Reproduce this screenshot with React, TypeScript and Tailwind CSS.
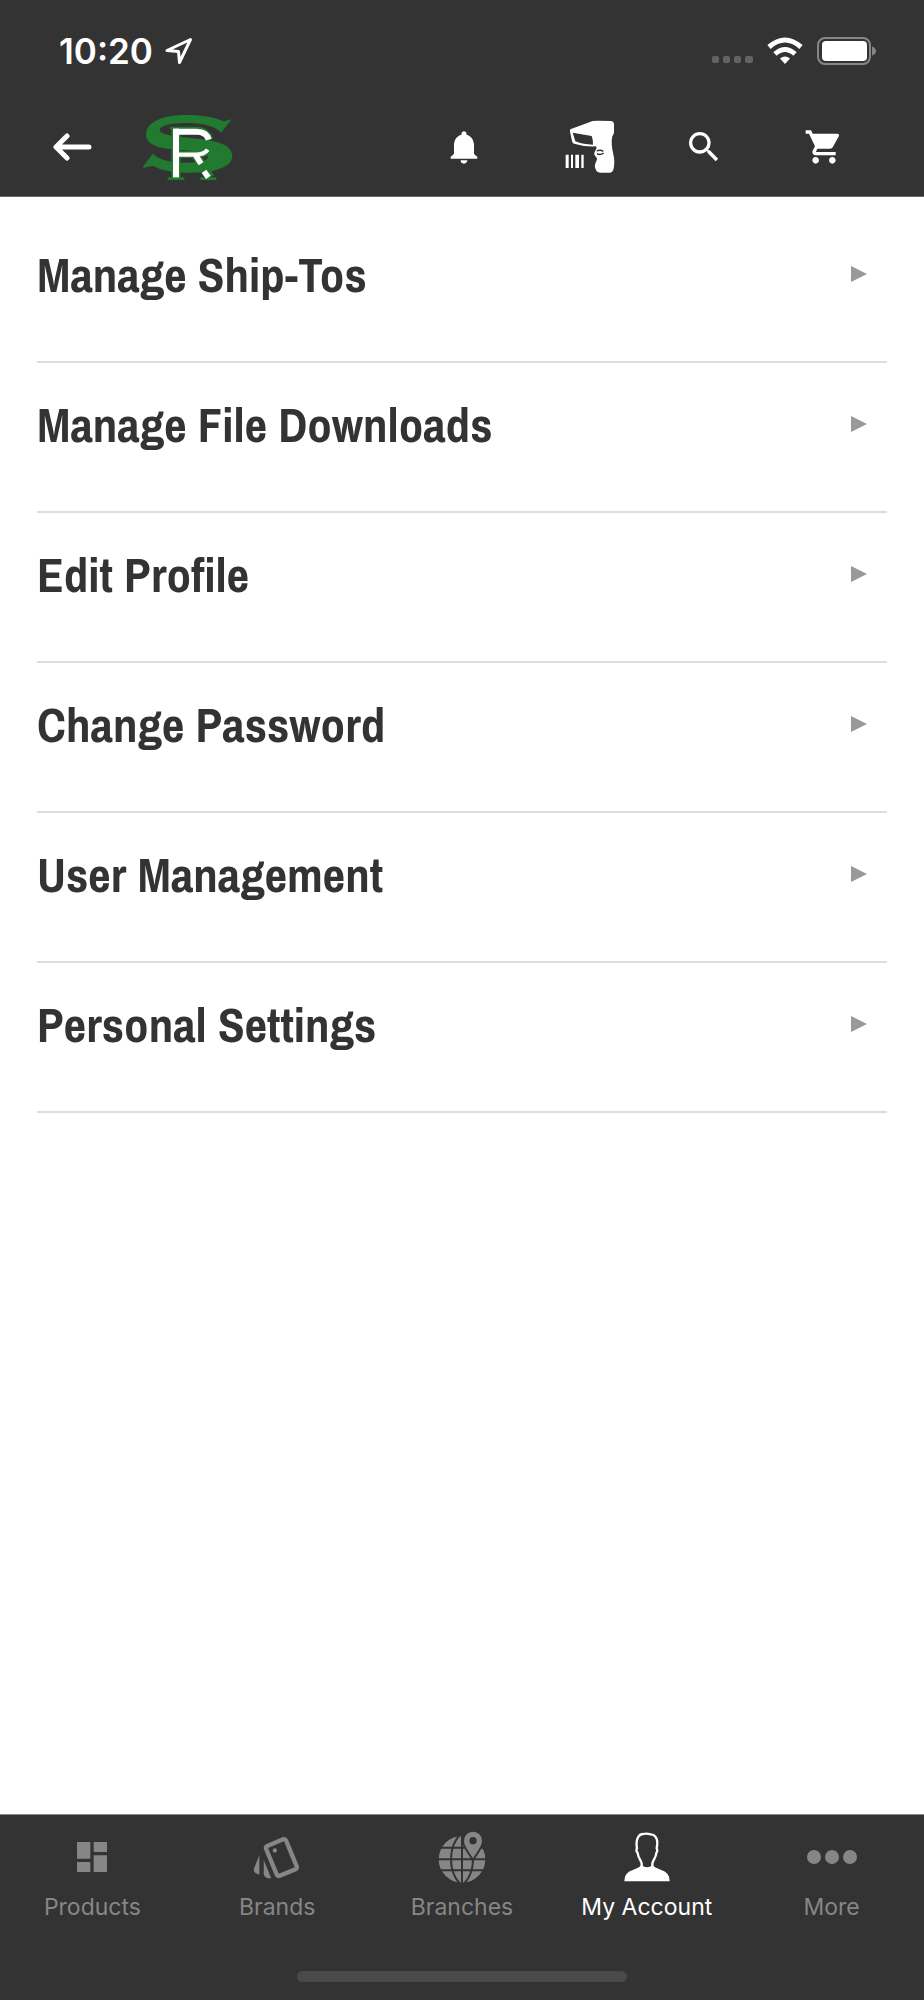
import type { ReactNode } from 'react'
import { MdDashboard, MdNotifications, MdOutlineStyle, MdSearch, MdShoppingCart } from 'react-icons/md'

interface Tab {
  label: string
  icon: ReactNode
  active?: boolean
}

const menuItems = [
  'Manage Ship-Tos',
  'Manage File Downloads',
  'Edit Profile',
  'Change Password',
  'User Management',
  'Personal Settings',
]

const tabs: Tab[] = [
  { label: 'Products', icon: <MdDashboard className="w-10 h-10" /> },
  { label: 'Brands', icon: <MdOutlineStyle className="w-[52px] h-[52px]" /> },
  { label: 'Branches', icon: <GlobePinIcon /> },
  { label: 'My Account', icon: <PersonIcon />, active: true },
  { label: 'More', icon: <MoreIcon /> },
]

function LocationIcon() {
  return (
    <svg viewBox="0 0 28 28" className="w-7 h-7" fill="none" stroke="currentColor" strokeWidth="3" strokeLinejoin="round">
      <path d="M25.500 2.500 L2 13.500 L13.500 14.500 L14.500 25.500 Z" />
    </svg>
  )
}

function StatusIcons() {
  return (
    <div className="flex items-center">
      <svg viewBox="0 0 42 28" className="w-[42px] h-7" fill="#636363">
        <rect x="0" y="19" width="7" height="7" rx="2" />
        <rect x="11" y="19" width="7" height="7" rx="2" />
        <rect x="22" y="19" width="7" height="7" rx="2" />
        <rect x="33" y="19" width="8" height="7" rx="2" />
      </svg>
      <svg viewBox="0 0 36 28" className="w-9 h-7 ml-[13px]" fill="none" stroke="#fff" strokeWidth="5">
        <path d="M2 10 Q18 -4 34 10" />
        <path d="M8 17 Q18 8 28 17" />
        <path d="M18 27 L13 21.500 Q18 17.500 23 21.500 Z" fill="#fff" stroke="none" />
      </svg>
      <svg viewBox="0 0 60 28" className="w-[60px] h-7 ml-[14px]">
        <rect x="1" y="1" width="52" height="26" rx="7" fill="none" stroke="#868686" strokeWidth="2" />
        <rect x="5" y="4" width="45" height="20" rx="4" fill="#fff" />
        <path d="M55 9.500 Q59 11 59 14 Q59 17 55 18.500 Z" fill="#868686" />
      </svg>
    </div>
  )
}

function Logo() {
  return (
    <svg viewBox="0 0 270 198" className="w-[90px] h-[66px]" fill="none">
      <path
        fill="#217a2f"
        d="M266 16 L234 56 C220 38 180 26 130 27 C84 27 50 34 50 48 C50 60 85 66 140 72 C210 78 268 88 268 126 C268 160 210 176 150 176 C100 176 60 172 30 155 L2 162 L0 158 L30 118 C40 136 80 146 130 146 C165 146 192 142 195 130 C196 118 160 110 110 107 C50 105 8 94 9 60 C10 20 70 2 130 3 C180 3 216 10 242 22 Z"
      />
      <g stroke="#217a2f">
        <path d="M99 40 V196" strokeWidth="28" />
        <path d="M80 42 H165 C190 45 202 58 206 74" strokeWidth="8" />
        <path d="M109 121 H165 C180 120 190 114 198 106" strokeWidth="22" />
        <path d="M158 124 L202 190" strokeWidth="26" />
        <path d="M74 194 H124 M172 194 H220" strokeWidth="8" />
      </g>
      <g stroke="#fff">
        <path d="M99 44 V190" strokeWidth="18" />
        <path d="M92 53 H160 C182 53 193 61 197 77" strokeWidth="18" />
        <path d="M107 122 H158 C176 122 188 116 194 107" strokeWidth="13" />
        <path d="M158 124 L174 149 M183 172 L196 190" strokeWidth="17" />
      </g>
    </svg>
  )
}

function ScannerIcon() {
  return (
    <svg viewBox="0 0 192 192" className="w-16 h-16" fill="currentColor">
      <path d="M55 43 L122 18 Q128 16 176 18 Q186 19 186 28 V50 Q186 58 181 64 Q176 84 184 118 Q190 142 184 164 Q181 173 174 173 H144 Q136 172 133 167 Q124 152 133 139 Q138 133 133 127 Q124 120 128 111 L134 99 L132 94 Q100 96 66 86 Q61 84 60 78 L54 50 Q53 45 55 43 Z" />
      <path d="M62 53 L119 63 Q124 76 123 89 Q94 89 70 79 Z" fill="#333" />
      <path d="M134 108 Q145 103 154 109 M135 116 Q145 122 155 114" fill="none" stroke="#333" strokeWidth="4" />
      <path d="M41 119 H50 V159 H41 Z M57 119 H63 V159 H57 Z M70 119 H81 V159 H70 Z M88 119 H95 V159 H88 Z" />
    </svg>
  )
}

function GlobePinIcon() {
  return (
    <svg viewBox="0 0 144 156" className="w-12 h-[52px]" fill="currentColor">
      <circle cx="72" cy="85" r="70" />
      <g fill="none" stroke="#333" strokeWidth="6">
        <path d="M72 12 V158 M0 50 H144 M0 85 H144 M0 118 H144" />
        <path d="M72 6 C28 44 28 126 72 164 M72 6 C116 44 116 126 72 164" />
      </g>
      <path
        d="M105 82 C94 62 78 46 78 29 A27 27 0 0 1 132 29 C132 46 116 62 105 82 Z"
        stroke="#333"
        strokeWidth="12"
        paintOrder="stroke"
      />
      <circle cx="105" cy="29" r="11" fill="#333" />
    </svg>
  )
}

function PersonIcon() {
  return (
    <svg viewBox="0 0 138 148" className="w-[46px] h-[50px]" fill="currentColor">
      <path d="M1 147 Q0 120 28 112 Q47 106 52 98 Q69 112 86 98 Q91 106 110 112 Q138 120 137 147 Z" />
      <path
        d="M53 104 V94 C52 84 42 78 41 62 Q35 56 39 48 C34 20 44 5 58 5 Q68 2 80 6 C98 8 103 24 98 48 Q102 56 97 62 C96 78 86 84 85 94 V104"
        fill="none"
        stroke="currentColor"
        strokeWidth="7"
      />
    </svg>
  )
}

function MoreIcon() {
  return (
    <svg viewBox="0 0 50 14" className="w-[50px] h-[14px]" fill="currentColor">
      <circle cx="7" cy="7" r="7" />
      <circle cx="25" cy="7" r="7" />
      <circle cx="43" cy="7" r="7" />
    </svg>
  )
}

function HeaderButton({ label, children }: { label: string; children: ReactNode }) {
  return (
    <button type="button" aria-label={label} className="w-[120px] h-16 flex items-center justify-center">
      {children}
    </button>
  )
}

export default function App() {
  return (
    <div className="min-h-screen flex flex-col bg-white text-[#333] font-['Inter',sans-serif]">
      <header className="bg-[#333] text-white border-b border-[#666]">
        {/* Status bar */}
        <div className="h-[99px] pt-[2px] pl-[59px] pr-[47px] flex items-center justify-between">
          <div className="flex items-center gap-3">
            <span className="text-[35px] leading-10 font-semibold">10:20</span>
            <LocationIcon />
          </div>
          <StatusIcons />
        </div>

        {/* Navigation bar */}
        <div className="h-[97px] px-10 pb-[2px] flex items-center justify-between">
          <div className="flex items-center gap-[39px]">
            <button type="button" aria-label="Back" className="w-16 h-16 flex items-center justify-center">
              <svg viewBox="0 0 40 28" className="w-10 h-7" fill="none" stroke="currentColor" strokeWidth="5" strokeLinecap="round" strokeLinejoin="round">
                <path d="M37 14 H4 M15 3 L4 14 L15 25" />
              </svg>
            </button>
            <a href="#" aria-label="Home">
              <Logo />
            </a>
          </div>
          <div className="flex items-center">
            <HeaderButton label="Notifications">
              <MdNotifications className="w-10 h-10" />
            </HeaderButton>
            <HeaderButton label="Scan barcode">
              <ScannerIcon />
            </HeaderButton>
            <HeaderButton label="Search">
              <MdSearch className="w-10 h-10" />
            </HeaderButton>
            <HeaderButton label="Cart">
              <MdShoppingCart className="w-10 h-10" />
            </HeaderButton>
          </div>
        </div>
      </header>

      <main className="flex-1 px-[37px] pt-4">
        <ul>
          {menuItems.map((item) => (
            <li key={item} className="border-b-2 border-[#ddd]">
              <a href="#" className="h-[148px] pb-[26px] pr-5 flex items-center justify-between">
                <span className="text-[49px] leading-[56px] font-bold font-['Archivo_Narrow','Liberation_Sans_Narrow','Arial_Narrow',sans-serif]">
                  {item}
                </span>
                <svg viewBox="0 0 16 16" className="w-4 h-4" fill="#999">
                  <path d="M0 0 L16 8 L0 16 Z" />
                </svg>
              </a>
            </li>
          ))}
        </ul>
      </main>

      <nav className="bg-[#333] border-t border-[#848a86] pt-4 pb-[18px]">
        <div className="grid grid-cols-5">
          {tabs.map((tab) => (
            <a
              key={tab.label}
              href="#"
              aria-current={tab.active ? 'page' : undefined}
              className={`flex flex-col items-center gap-[10px] ${tab.active ? 'text-white' : 'text-[#868686]'}`}
            >
              <span className="h-[52px] flex items-center">{tab.icon}</span>
              <span className="text-[23px] leading-7">{tab.label}</span>
            </a>
          ))}
        </div>
        {/* Home indicator */}
        <div className="w-[330px] h-[11px] mt-[50px] mx-auto rounded-full bg-[#4a4a4a]" />
      </nav>
    </div>
  )
}
